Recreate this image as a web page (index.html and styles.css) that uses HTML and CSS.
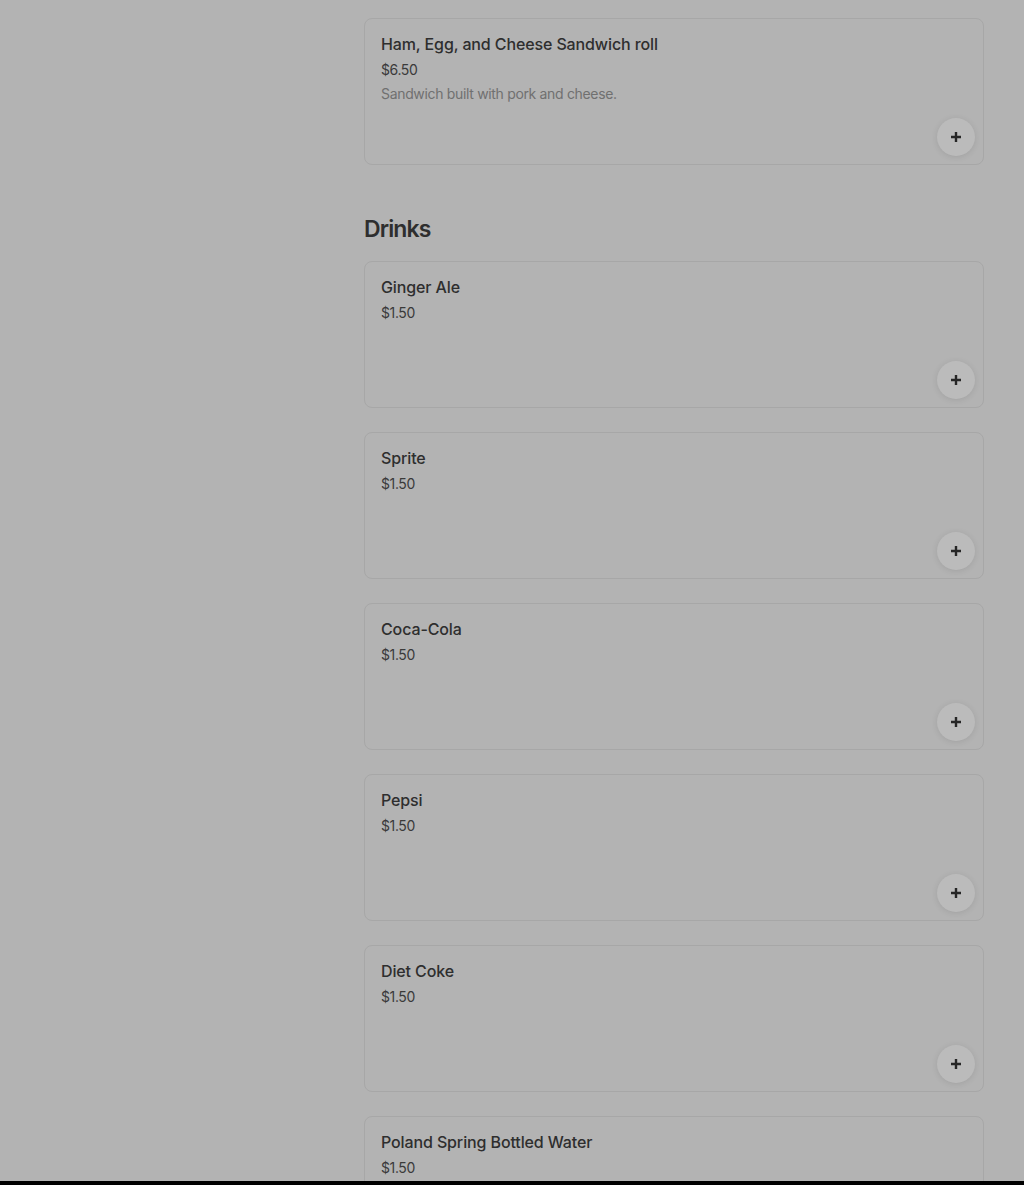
FILE: index.html
```html
<!DOCTYPE html>
<html lang="en">
<head>
  <meta charset="UTF-8" />
  <title>Menu</title>
  <link rel="stylesheet" href="styles.css">
</head>
<body>
  <div class="screen">
    <div class="menu">
      <div class="item">
        <div class="item-name">Ham, Egg, and Cheese Sandwich roll</div>
        <div class="item-price">$6.50</div>
        <div class="item-desc">Sandwich built with pork and cheese.</div>
        <button class="add"><svg viewBox="0 0 12 12" width="12" height="12"><path d="M6 1v10M1 6h10" stroke="currentColor" stroke-width="2.4"/></svg></button>
      </div>

      <h2 class="section-title">Drinks</h2>

      <div class="item">
        <div class="item-name">Ginger Ale</div>
        <div class="item-price">$1.50</div>
        <button class="add"><svg viewBox="0 0 12 12" width="12" height="12"><path d="M6 1v10M1 6h10" stroke="currentColor" stroke-width="2.4"/></svg></button>
      </div>
      <div class="item">
        <div class="item-name">Sprite</div>
        <div class="item-price">$1.50</div>
        <button class="add"><svg viewBox="0 0 12 12" width="12" height="12"><path d="M6 1v10M1 6h10" stroke="currentColor" stroke-width="2.4"/></svg></button>
      </div>
      <div class="item">
        <div class="item-name">Coca-Cola</div>
        <div class="item-price">$1.50</div>
        <button class="add"><svg viewBox="0 0 12 12" width="12" height="12"><path d="M6 1v10M1 6h10" stroke="currentColor" stroke-width="2.4"/></svg></button>
      </div>
      <div class="item">
        <div class="item-name">Pepsi</div>
        <div class="item-price">$1.50</div>
        <button class="add"><svg viewBox="0 0 12 12" width="12" height="12"><path d="M6 1v10M1 6h10" stroke="currentColor" stroke-width="2.4"/></svg></button>
      </div>
      <div class="item">
        <div class="item-name">Diet Coke</div>
        <div class="item-price">$1.50</div>
        <button class="add"><svg viewBox="0 0 12 12" width="12" height="12"><path d="M6 1v10M1 6h10" stroke="currentColor" stroke-width="2.4"/></svg></button>
      </div>
      <div class="item">
        <div class="item-name">Poland Spring Bottled Water</div>
        <div class="item-price">$1.50</div>
        <button class="add"><svg viewBox="0 0 12 12" width="12" height="12"><path d="M6 1v10M1 6h10" stroke="currentColor" stroke-width="2.4"/></svg></button>
      </div>
    </div>
  </div>
</body>
</html>
```

FILE: styles.css
```css
html {
  background: #000;
}
body {
  margin: 0;
  font-family: Inter, "Noto Sans", sans-serif;
  color: #2e2e2e;
}
.screen {
  height: 1181px;
  overflow: hidden;
  background: #b3b3b3;
}
.menu {
  width: 620px;
  margin-left: 364px;
  padding-top: 18px;
  display: flex;
  flex-direction: column;
  gap: 24px;
}
.item {
  position: relative;
  box-sizing: border-box;
  height: 147px;
  padding: 13px 16px;
  border: 1px solid #a7a7a7;
  border-radius: 8px;
}
.item-name {
  font-size: 16px;
  font-weight: 500;
  line-height: 24px;
  letter-spacing: -0.12px;
  color: #2e2e2e;
}
.item-price {
  margin-top: 4px;
  font-size: 14px;
  line-height: 20px;
  letter-spacing: -0.4px;
  color: #3a3a3a;
}
.item-desc {
  margin-top: 4px;
  font-size: 14px;
  line-height: 20px;
  letter-spacing: -0.33px;
  color: #707070;
}
.add {
  position: absolute;
  right: 8px;
  bottom: 8px;
  width: 38px;
  height: 38px;
  border: none;
  border-radius: 50%;
  background: #bbbbbb;
  box-shadow: 0 1px 6px rgba(0, 0, 0, 0.1);
  color: #262626;
  display: flex;
  align-items: center;
  justify-content: center;
  padding: 0;
}
.section-title {
  margin: 24px 0 -8px;
  font-size: 23px;
  line-height: 32px;
  font-weight: 600;
  letter-spacing: -0.9px;
  color: #2e2e2e;
}
```
